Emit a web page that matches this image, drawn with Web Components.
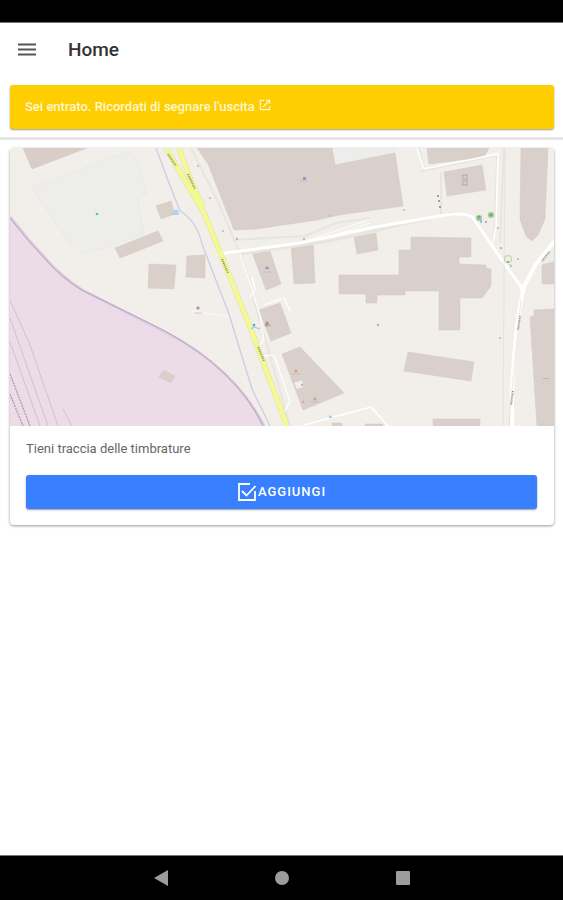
<!DOCTYPE html>
<html lang="it">
<head>
<meta charset="utf-8">
<meta name="viewport" content="width=device-width, initial-scale=1">
<title>Home</title>
<style>
  body {
    margin: 0;
    background: #fff;
    color: #333;
    font-family: Roboto, "Liberation Sans", sans-serif;
  }
</style>
</head>
<body>
<app-shell>
  <app-toolbar slot="header">Home</app-toolbar>
  <app-notice href="#uscita">Sei entrato. Ricordati di segnare l'uscita</app-notice>
  <app-card>
    <street-map slot="media"></street-map>
    Tieni traccia delle timbrature
    <add-button slot="action">AGGIUNGI</add-button>
  </app-card>
  <system-nav slot="footer"></system-nav>
</app-shell>

<script>
const shell = document.createElement("template");
const toolbar = document.createElement("template");
const notice = document.createElement("template");
const card = document.createElement("template");
const addButton = document.createElement("template");
const systemNav = document.createElement("template");
const streetMap = document.createElement("template");

shell.innerHTML = /* HTML */ `
  <style>
    :host {
      display: flex;
      flex-direction: column;
      min-height: 100vh;
    }

    .statusBar {
      height: 22px;
      background: #000;
      border-bottom: 1px solid #777;
    }

    main {
      flex: 1;
    }
  </style>
  <div class="statusBar"></div>
  <slot name="header"></slot>
  <main><slot></slot></main>
  <slot name="footer"></slot>
`;

toolbar.innerHTML = /* HTML */ `
  <style>
    :host {
      display: flex;
      align-items: center;
      gap: 30px;
      height: 54px;
      padding: 0 16px;
    }

    button {
      display: flex;
      padding: 0;
      border: 0;
      background: none;
    }

    h1 {
      margin: 0;
      color: #333;
      font-size: 19px;
      line-height: 24px;
      font-weight: 500;
    }
  </style>
  <button aria-label="Menu">
    <svg width="22" height="22" viewBox="0 0 22 22" stroke="#555" stroke-width="2">
      <path d="M2 5.5h18M2 10.5h18M2 15.5h18" />
    </svg>
  </button>
  <h1><slot></slot></h1>
`;

notice.innerHTML = /* HTML */ `
  <style>
    :host {
      display: block;
      padding: 8px 9px 8px 10px;
      border-bottom: 3px solid #e6e5e6;
    }

    a {
      display: flex;
      align-items: center;
      gap: 4px;
      height: 44px;
      padding: 0 15px;
      border-radius: 3px;
      background: #ffce00;
      box-shadow: 0 1px 2px rgba(0, 0, 0, 0.4);
      color: #fff6d2;
      font-size: 13px;
      line-height: 18px;
      font-weight: 500;
      text-decoration: none;
    }

    svg {
      margin-bottom: 4px;
    }
  </style>
  <a>
    <span><slot></slot></span>
    <svg width="12" height="12" viewBox="0 0 12 12" fill="none" stroke="currentColor" stroke-width="1.2">
      <path d="M5 1.3H1.3v9.4h9.4V7M7 1.3h3.7V5M10.5 1.5 4 8" />
    </svg>
  </a>
`;

card.innerHTML = /* HTML */ `
  <style>
    :host {
      display: block;
      margin: 8px 9px 8px 10px;
      overflow: hidden;
      border-radius: 4px;
      background: #fff;
      box-shadow: 0 1px 3px rgba(0, 0, 0, 0.4);
    }

    .body {
      display: grid;
      gap: 17px;
      padding: 14px 17px 16px 16px;
    }

    p {
      margin: 0;
      color: #666;
      font-size: 13px;
      line-height: 18px;
    }
  </style>
  <slot name="media"></slot>
  <div class="body">
    <p><slot></slot></p>
    <slot name="action"></slot>
  </div>
`;

addButton.innerHTML = /* HTML */ `
  <style>
    :host {
      display: block;
    }

    button {
      display: flex;
      align-items: center;
      justify-content: center;
      gap: 1px;
      width: 100%;
      height: 34px;
      padding: 0;
      border: 0;
      border-radius: 3px;
      background: #3880ff;
      box-shadow: 0 1px 2px rgba(0, 0, 0, 0.4);
      color: #fff;
      font: 500 13px/18px Roboto, "Liberation Sans", sans-serif;
      letter-spacing: 1px;
    }
  </style>
  <button>
    <svg width="20" height="20" viewBox="0 0 20 20" fill="none" stroke="currentColor" stroke-width="1.8">
      <path d="M13 2H2v16h16V9" />
      <path d="m5 9 4.5 4.5L18.5 4" />
    </svg>
    <slot></slot>
  </button>
`;

systemNav.innerHTML = /* HTML */ `
  <style>
    :host {
      display: flex;
      align-items: center;
      justify-content: center;
      gap: 73px;
      height: 44px;
      border-top: 1px solid #777;
      background: #000;
    }

    button {
      display: flex;
      justify-content: center;
      width: 48px;
      padding: 0;
      border: 0;
      background: none;
    }

    svg {
      fill: #9c9c9c;
    }
  </style>
  <button aria-label="Indietro">
    <svg width="16" height="16"><path d="M15 0v16L1 8z" /></svg>
  </button>
  <button aria-label="Home">
    <svg width="16" height="16"><circle cx="8" cy="8" r="7" /></svg>
  </button>
  <button aria-label="Recenti">
    <svg width="16" height="16"><rect x="1" y="1" width="14" height="14" rx="1" /></svg>
  </button>
`;

streetMap.innerHTML = /* HTML */ `
  <style>
    :host {
      display: block;
    }

    svg {
      display: block;
      width: 100%;
      height: auto;
    }
  </style>
  <svg viewBox="10 148 544 278" fill="none" role="img" aria-label="Mappa">
    <rect x="10" y="148" width="544" height="278" fill="#f2eee9" />

    <!-- parking area and paved spots -->
    <g fill="#ededec" stroke="#e6e6e2" stroke-width="0.6">
      <path d="M32 188 128 151l10 10 9 32-9 6 6 35-60 20-19-16z" />
      <path d="M332 148h65l-3 5-60 12z" />
      <path d="M543 262l11-11v10l-8 3z" />
    </g>

    <!-- railway ground -->
    <path d="M10 217 28 239 47 260 82 290 165 332 190 348 225 374 250 402 264 426H10z" fill="#ecdce8" />
    <path d="M10 217 28 239 47 260Q62 277 82 290L165 332Q200 350 225 374T264 426" stroke="#dfcce0" stroke-width="3" />
    <path d="M10 218 28 240 47 261Q62 278 82 290L165 331Q200 350 225 374T263 426" stroke="#b3a3bb" stroke-width="1" />
    <path d="M10 300 30 345 58 426M10 318 48 426M10 342 40 426M63 409l9 17" stroke="#c9bac8" stroke-width="0.8" />
    <path d="M10 374 30 426M10 394 23 426" stroke="#a89ca9" stroke-width="1.3" stroke-dasharray="2 1" />

    <!-- buildings -->
    <g fill="#d9d0c9" stroke="#d3c9c3" stroke-width="0.5">
      <path d="M23 148h64l-55 21z" fill="#d9cdc8" />
      <path d="M156 206l15-5 4 13-14 5z" />
      <path d="M115 248l43-17 5 10-43 17z" />
      <path d="M149 264l27 1-2 24-26-1z" />
      <path d="M187 256l18-1v23l-19-1z" />
      <path d="M163 370l12 6-4 7-12-6z" />
    </g>
    <g fill="#d9cfcb" stroke="#d2c8c4" stroke-width="0.5">
      <path d="M197 148h135l3 17 60-12 8 53-64 9-22 5-61 9-22 1-26-66z" />
      <path d="M252 252l17-4 12 36-15 6z" />
      <path d="M291 244l22-2 2 41-21 1z" />
      <path d="M354 237l22-4 2 17-21 4z" />
      <path d="M259 310l21-7 11 30-20 8z" />
      <path d="M282 354l18-7 44 46-41 17z" />
      <path d="M339 275h60V250h12V237l60 1v19h-12v7l27 1v3l5 1v17l-9 12h-22v32h-21v-39h-34v4h-28v8h-11v-9h-27z" />
      <path d="M408 352l66 10-3 19-67-10z" />
      <path d="M427 148h62l-5 9-55 7z" />
      <path d="M444 172l38-7 4 25-39 6z" />
      <path d="M521 148h27l-3 71-7 16-6 6-6-5-6-17z" />
      <path d="M542 265l12-3v22h-12z" />
      <path d="M530 317l4-1v-6l20-1v117h-17z" />
      <path d="M433 419h47v7h-47zM332 423h10v3h-10zM365 424h18v2h-18z" />
    </g>
    <path d="M294 383l8-3 1 7-6 2z" fill="#f2eee9" />

    <!-- service roads -->
    <g stroke="#e8e5e0" stroke-width="3" stroke-linejoin="round">
      <path d="M191 148 219 204 242 258 290 426" stroke-width="2" />
      <path d="M240 254 330 241 452 213l18 2" />
      <path d="M419 148l5 20-2 3 75-16-2 70-3 20M441 172v42M504 148l-4 95" stroke-width="2" />
      <path d="M232 240 305 236 336 223 370 218" stroke-width="2" />
    </g>
    <g stroke="#fff" stroke-linejoin="round" stroke-linecap="round">
      <path d="M218 254 300 243 370 228 445 215q22-3 28 3l22 32 27 38" stroke-width="3" />
      <path d="M524 288q-8 28-12 100v38M522 290 536 264 554 242" stroke-width="4" />
      <path d="M417 148l7 21 74-15-2 72-4 20" stroke-width="1.6" />
      <path d="M306 241 345 228 368 220M325 238l45-15M470 160l27-7" stroke-width="0.9" />
      <path d="M240 254 260 315 264 340 258 347M250 297l5-8-3-12M264 305l20-7 6 13M264 356l10-1 16 46-7 14" stroke-width="1.2" />
      <path d="M304 425 371 407 388 426" stroke-width="1.6" />
    </g>
    <path d="M190 311l40 6" stroke="#fff" stroke-width="0.6" />
    <path d="M509 426 512 390 521 300M505 148l-2 278" stroke="#dededa" stroke-width="0.7" />

    <!-- stream -->
    <path d="M156 148 169 183 180 211Q197 221 202 244L229 314 252 389 270 426" stroke="#cbcce8" stroke-width="1.3" />

    <!-- main road -->
    <g stroke-linejoin="round">
      <path d="M166 148 191 191 204 213 226 267 250 327 287 426M179 148 191 181 203 207" stroke="#e0e4ad" stroke-width="5.6" />
      <path d="M166 148 191 191 204 213 226 267 250 327 287 426M179 148 191 181 203 207" stroke="#f5f994" stroke-width="4.4" />
    </g>
    <path d="M168 154l8 12M188 174l7 15M222 259l6 14M258 347l6 14" stroke="#969a68" stroke-width="2" stroke-dasharray="1.2 0.8" />
    <path d="M542 261l8-10M520 316l-2 14M513 391l-2 14" stroke="#999" stroke-width="2" stroke-dasharray="1.2 0.9" />

    <!-- points of interest -->
    <circle cx="97" cy="214" r="1.3" fill="#55c5a4" />
    <path d="M172 214h7M251 329l3-2 6 2" stroke="#a5c9ec" stroke-width="1.3" />
    <circle cx="254" cy="325" r="1.3" fill="#4aa9d5" />
    <circle cx="176" cy="212" r="2.5" fill="#b5d0f0" />
    <g fill="#b38bbf">
      <path d="M303 177h3v3h-3zM265 268l2-2 2 2v1h-4zM196 308l2-2 2 2-2 2z" />
    </g>
    <path d="M300 181h8M264 272h7M195 313h7" stroke="#c8b5c6" stroke-width="0.8" />
    <g fill="#d99f82">
      <circle cx="296" cy="371" r="1.5" />
      <circle cx="302" cy="385" r="1.1" />
      <circle cx="315" cy="399" r="1.5" />
      <circle cx="303" cy="402" r="1.1" />
    </g>
    <path d="M292 374h8M311 402h8" stroke="#d8b3a4" stroke-width="0.8" />
    <path d="M265 326l2-4 3 4M267 322v5" stroke="#ab8f88" stroke-width="1.2" />
    <g fill="#9bcb8e">
      <circle cx="479" cy="218" r="3" />
      <circle cx="491" cy="215" r="3" />
    </g>
    <circle cx="479" cy="217" r="1.3" fill="#69ae63" />
    <circle cx="491" cy="215" r="1.3" fill="#69ae63" />
    <path d="M481 220v3" stroke="#74b6de" stroke-width="1.5" />
    <circle cx="508" cy="259" r="3.4" stroke="#bcd9b2" stroke-width="1.2" />
    <path d="M509 264l3 2-2 1" stroke="#9ec898" stroke-width="1" />
    <path d="M437 195h2v2h-2zM438 200h2v2h-2zM439 206h2v2h-2z" fill="#9fa382" />
    <path d="M462 175h6M463 175v10M467 175v10M462 185h6M465 178v4" stroke="#b3aaa7" stroke-width="1" />
    <g fill="#bfb4b1">
      <circle cx="198" cy="166" r="1" />
      <circle cx="210" cy="198" r="1" />
      <circle cx="223" cy="231" r="1" />
      <circle cx="237" cy="239" r="1.2" />
      <circle cx="304" cy="239" r="1.2" />
      <circle cx="330" cy="216" r="1" />
      <circle cx="404" cy="210" r="1" />
      <circle cx="518" cy="259" r="1" />
      <circle cx="500" cy="338" r="1" />
      <circle cx="378" cy="325" r="1.2" />
      <circle cx="486" cy="222" r="1" fill="#cf8a83" />
      <circle cx="498" cy="228" r="1" fill="#e0a49f" />
      <circle cx="501" cy="248" r="1" fill="#cf8a83" />
      <circle cx="508" cy="262" r="1" fill="#c97570" />
      <path d="M543 378h6v1h-6z" />
      <path d="M329 415l4 3h-4z" fill="#9dc3df" />
    </g>
  </svg>
`;

class TemplateElement extends HTMLElement {
  constructor(template) {
    super();
    this.attachShadow({ mode: "open" }).appendChild(template.content.cloneNode(true));
  }
}

class AppShell extends TemplateElement {
  constructor() {
    super(shell);
  }
}

class AppToolbar extends TemplateElement {
  constructor() {
    super(toolbar);
  }
}

class AppNotice extends TemplateElement {
  constructor() {
    super(notice);
  }

  connectedCallback() {
    this.shadowRoot.querySelector("a").href = this.getAttribute("href") || "#";
  }
}

class AppCard extends TemplateElement {
  constructor() {
    super(card);
  }
}

class AddButton extends TemplateElement {
  constructor() {
    super(addButton);
  }
}

class SystemNav extends TemplateElement {
  constructor() {
    super(systemNav);
  }
}

class StreetMap extends TemplateElement {
  constructor() {
    super(streetMap);
  }
}

customElements.define("app-shell", AppShell);
customElements.define("app-toolbar", AppToolbar);
customElements.define("app-notice", AppNotice);
customElements.define("app-card", AppCard);
customElements.define("add-button", AddButton);
customElements.define("system-nav", SystemNav);
customElements.define("street-map", StreetMap);
</script>
</body>
</html>
